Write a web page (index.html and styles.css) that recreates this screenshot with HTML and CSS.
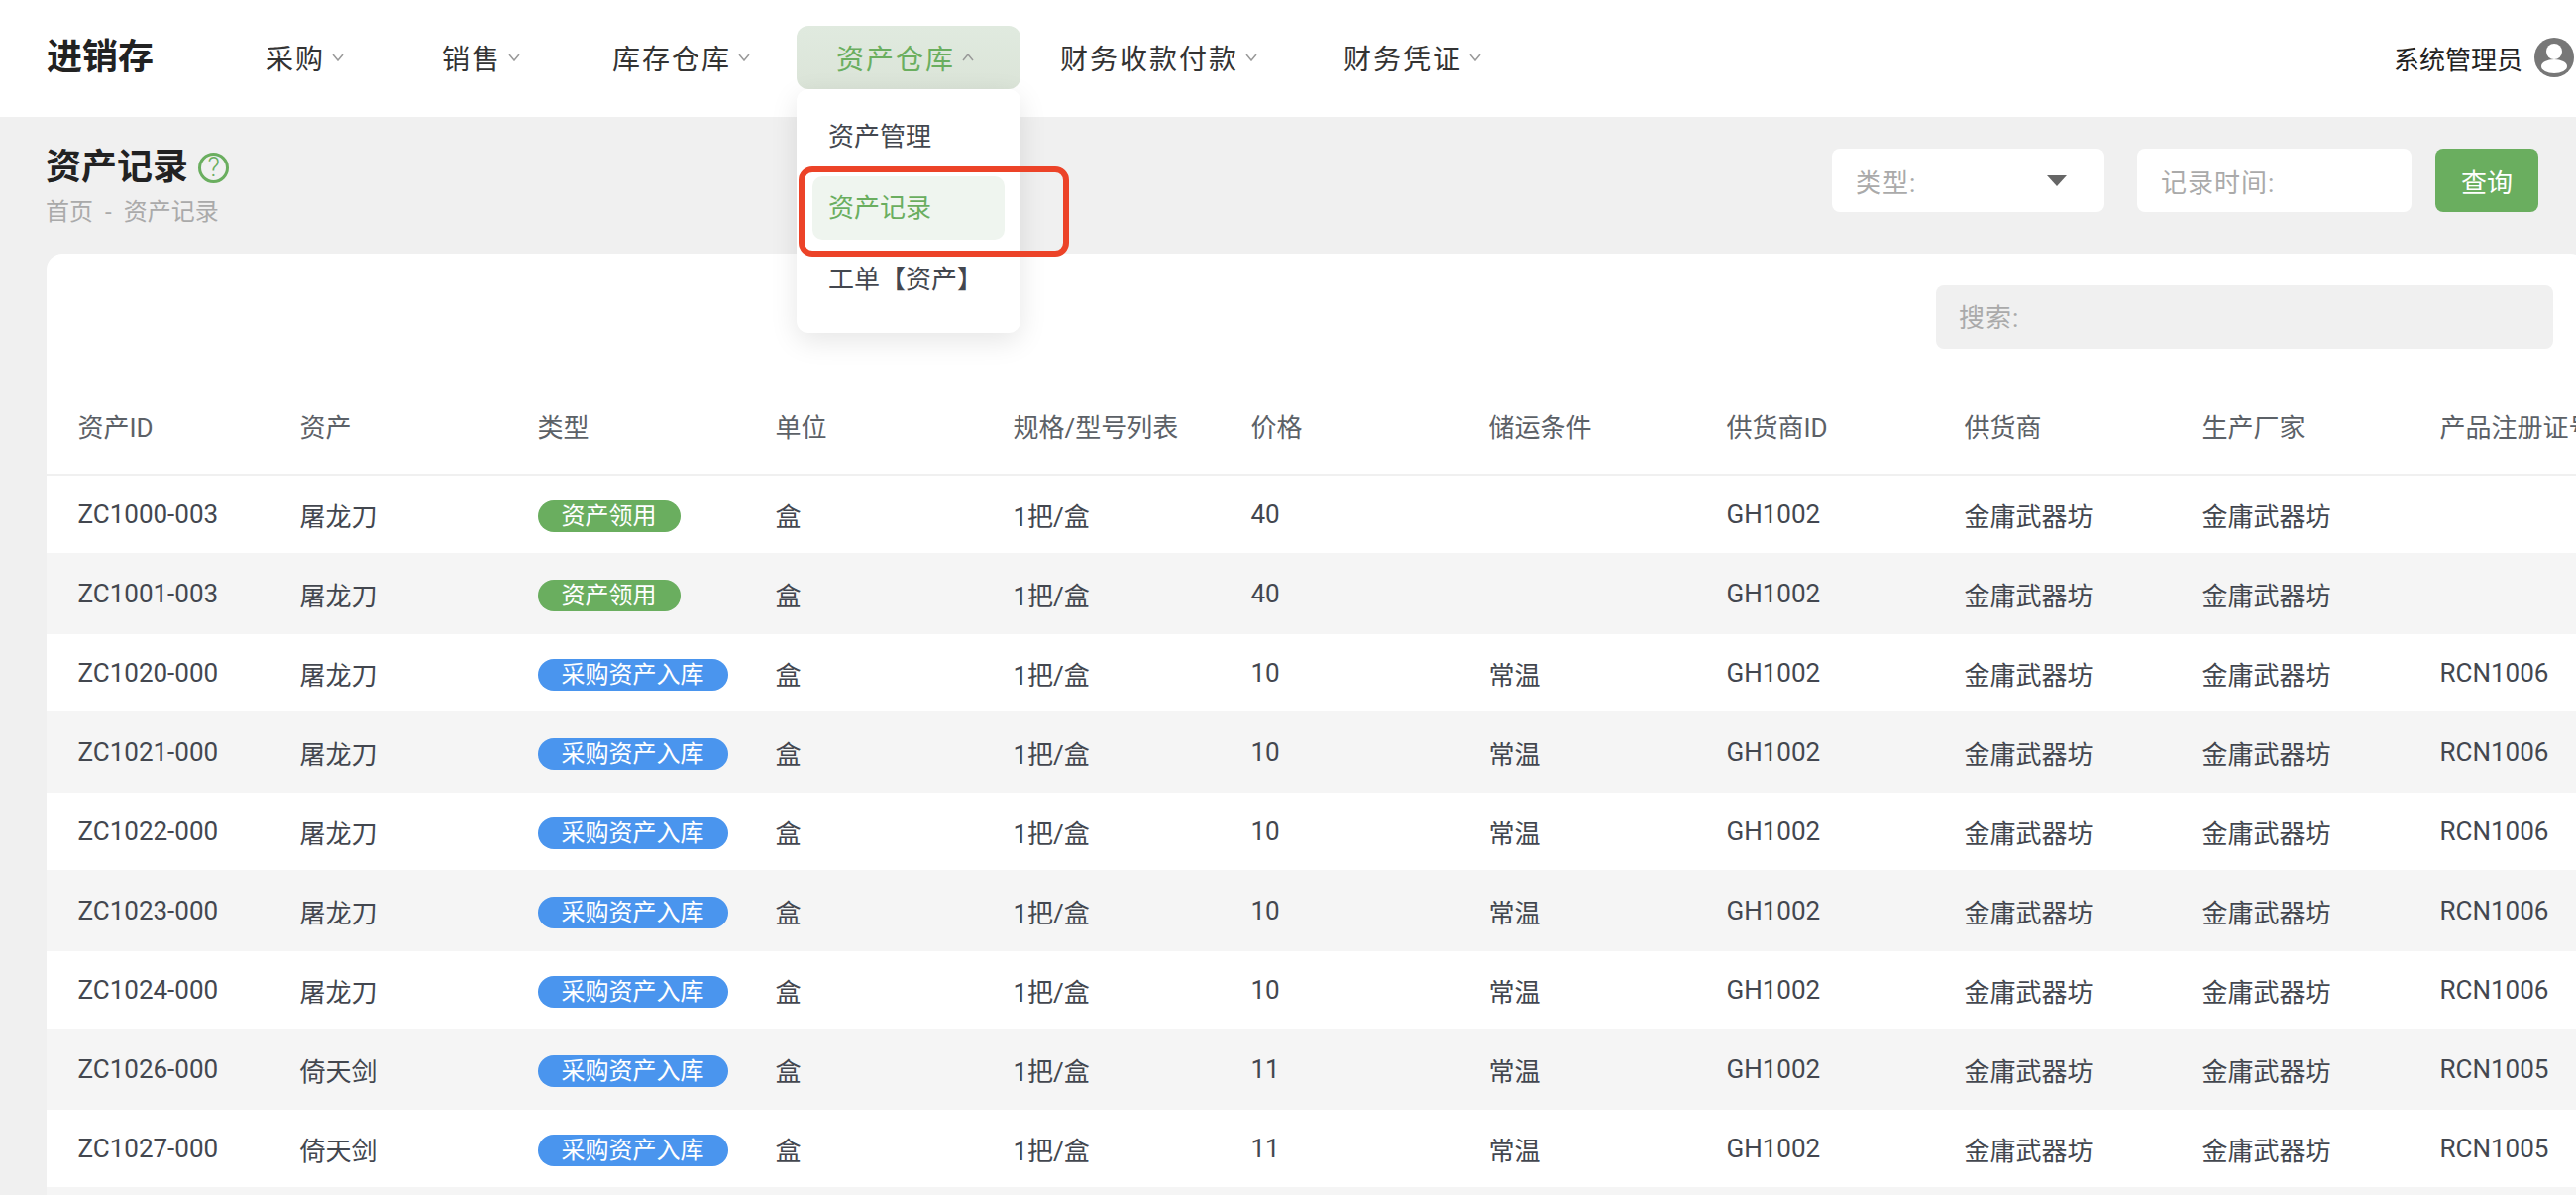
FILE: index.html
```html
<!DOCTYPE html>
<html lang="zh-CN">
<head>
<meta charset="utf-8">
<title>资产记录</title>
<link rel="stylesheet" href="styles.css">
</head>
<body>
<header class="topbar">
  <div class="logo">进销存</div>
  <nav class="nav">
    <div class="nav-item"><span class="nav-text">采购</span><svg class="chev" viewBox="0 0 12 8"><path d="M1 1l5 6 5-6"/></svg></div>
    <div class="nav-item"><span class="nav-text">销售</span><svg class="chev" viewBox="0 0 12 8"><path d="M1 1l5 6 5-6"/></svg></div>
    <div class="nav-item"><span class="nav-text">库存仓库</span><svg class="chev" viewBox="0 0 12 8"><path d="M1 1l5 6 5-6"/></svg></div>
    <div class="nav-item active"><span class="nav-text">资产仓库</span><svg class="chev" viewBox="0 0 12 8"><path d="M1 7l5-6 5 6"/></svg>
      <div class="dropdown">
        <div class="drop-item">资产管理</div>
        <div class="drop-item current">资产记录</div>
        <div class="drop-item">工单【资产】</div>
      </div>
      <div class="callout"></div>
    </div>
    <div class="nav-item"><span class="nav-text">财务收款付款</span><svg class="chev" viewBox="0 0 12 8"><path d="M1 1l5 6 5-6"/></svg></div>
    <div class="nav-item"><span class="nav-text">财务凭证</span><svg class="chev" viewBox="0 0 12 8"><path d="M1 1l5 6 5-6"/></svg></div>
  </nav>
  <div class="user">
    <span class="user-name">系统管理员</span>
    <svg class="avatar" viewBox="0 0 40 40"><circle cx="20" cy="20" r="20" fill="#777"/><circle cx="20" cy="14" r="8" fill="#fff"/><ellipse cx="20" cy="29" rx="13" ry="7" fill="#fff"/></svg>
  </div>
</header>
<section class="page-head">
  <div class="title-block">
    <div class="title-row"><h1 class="title">资产记录</h1><span class="help">?</span></div>
    <div class="crumb"><span>首页</span><span class="sep">-</span><span>资产记录</span></div>
  </div>
  <div class="filters">
    <div class="field field-select"><span>类型:</span><i class="caret"></i></div>
    <div class="field"><span>记录时间:</span></div>
    <button class="btn">查询</button>
  </div>
</section>
<main class="card">
  <div class="toolbar"><div class="search">搜索:</div></div>
  <div class="table-wrap">
    <table class="table">
      <thead>
        <tr><th>资产ID</th><th>资产</th><th>类型</th><th>单位</th><th>规格/型号列表</th><th>价格</th><th>储运条件</th><th>供货商ID</th><th>供货商</th><th>生产厂家</th><th>产品注册证号</th></tr>
      </thead>
      <tbody>
        <tr><td>ZC1000-003</td><td>屠龙刀</td><td><span class="tag green">资产领用</span></td><td>盒</td><td>1把/盒</td><td>40</td><td></td><td>GH1002</td><td>金庸武器坊</td><td>金庸武器坊</td><td></td></tr>
        <tr><td>ZC1001-003</td><td>屠龙刀</td><td><span class="tag green">资产领用</span></td><td>盒</td><td>1把/盒</td><td>40</td><td></td><td>GH1002</td><td>金庸武器坊</td><td>金庸武器坊</td><td></td></tr>
        <tr><td>ZC1020-000</td><td>屠龙刀</td><td><span class="tag blue">采购资产入库</span></td><td>盒</td><td>1把/盒</td><td>10</td><td>常温</td><td>GH1002</td><td>金庸武器坊</td><td>金庸武器坊</td><td>RCN1006</td></tr>
        <tr><td>ZC1021-000</td><td>屠龙刀</td><td><span class="tag blue">采购资产入库</span></td><td>盒</td><td>1把/盒</td><td>10</td><td>常温</td><td>GH1002</td><td>金庸武器坊</td><td>金庸武器坊</td><td>RCN1006</td></tr>
        <tr><td>ZC1022-000</td><td>屠龙刀</td><td><span class="tag blue">采购资产入库</span></td><td>盒</td><td>1把/盒</td><td>10</td><td>常温</td><td>GH1002</td><td>金庸武器坊</td><td>金庸武器坊</td><td>RCN1006</td></tr>
        <tr><td>ZC1023-000</td><td>屠龙刀</td><td><span class="tag blue">采购资产入库</span></td><td>盒</td><td>1把/盒</td><td>10</td><td>常温</td><td>GH1002</td><td>金庸武器坊</td><td>金庸武器坊</td><td>RCN1006</td></tr>
        <tr><td>ZC1024-000</td><td>屠龙刀</td><td><span class="tag blue">采购资产入库</span></td><td>盒</td><td>1把/盒</td><td>10</td><td>常温</td><td>GH1002</td><td>金庸武器坊</td><td>金庸武器坊</td><td>RCN1006</td></tr>
        <tr><td>ZC1026-000</td><td>倚天剑</td><td><span class="tag blue">采购资产入库</span></td><td>盒</td><td>1把/盒</td><td>11</td><td>常温</td><td>GH1002</td><td>金庸武器坊</td><td>金庸武器坊</td><td>RCN1005</td></tr>
        <tr><td>ZC1027-000</td><td>倚天剑</td><td><span class="tag blue">采购资产入库</span></td><td>盒</td><td>1把/盒</td><td>11</td><td>常温</td><td>GH1002</td><td>金庸武器坊</td><td>金庸武器坊</td><td>RCN1005</td></tr>
        <tr><td colspan="11"></td></tr>
      </tbody>
    </table>
  </div>
</main>
</body>
</html>
```
FILE: styles.css
```css
* { box-sizing: border-box; }
html, body { margin: 0; height: 100%; overflow: hidden; }
body {
  background: #f0f0f0;
  color: #43474f;
  font-family: Roboto, "Noto Sans CJK SC", sans-serif;
  font-size: 26px;
}
.topbar {
  height: 118px;
  background: #fff;
  display: flex;
  align-items: flex-start;
  padding-left: 47px;
}
.logo {
  width: 175px;
  height: 116px;
  line-height: 116px;
  font-size: 36px;
  font-weight: 700;
  color: #222;
}
.nav { display: flex; margin-top: 26px; }
.nav-item {
  position: relative;
  min-width: 178px;
  height: 64px;
  padding: 0 40px;
  display: flex;
  align-items: center;
  justify-content: center;
  border-radius: 12px;
  color: #333;
}
.nav-text { font-size: 28px; letter-spacing: 2px; }
.chev {
  width: 12px;
  height: 8px;
  margin: 0 7px;
  fill: none;
  stroke: #999;
  stroke-width: 1.5;
}
.nav-item.active {
  background: linear-gradient(#e0eadf, #dbe4d8);
  color: #6aae5f;
}
.dropdown {
  position: absolute;
  top: 64px;
  left: 0;
  width: 226px;
  height: 246px;
  background: #fff;
  border-radius: 12px;
  padding: 16px;
  box-shadow: 0 8px 28px rgba(0, 0, 0, .1);
  z-index: 5;
}
.drop-item {
  height: 64px;
  margin-bottom: 8px;
  line-height: 64px;
  padding-left: 16px;
  font-size: 26px;
  border-radius: 10px;
  color: #43474f;
}
.drop-item.current { background: #eff5ef; color: #6aae5f; }
.callout {
  position: absolute;
  left: 2px;
  top: 142px;
  width: 273px;
  height: 91px;
  border: 6px solid #ec4328;
  border-radius: 14px;
  z-index: 6;
}
.user { margin-left: auto; display: flex; align-items: center; height: 116px; padding-right: 2px; }
.user-name { font-size: 26px; color: #222; margin-right: 12px; }
.avatar { width: 40px; height: 40px; }
.page-head {
  height: 138px;
  padding: 33px 38px 0 46px;
  display: flex;
  justify-content: space-between;
  align-items: flex-start;
}
.title-row { display: flex; align-items: center; height: 36px; }
.title { margin: 0; font-size: 36px; font-weight: 700; color: #222; line-height: 36px; }
.help {
  width: 31px;
  height: 31px;
  margin-left: 10px;
  border: 3px solid #6aae5f;
  border-radius: 50%;
  color: #6aae5f;
  font-size: 27px;
  font-weight: 300;
  line-height: 25px;
  text-align: center;
}
.crumb { margin-top: 10px; font-size: 24px; color: #aaa; line-height: 34px; display: flex; }
.sep { margin: 0 12px; }
.filters { display: flex; gap: 33px; margin-top: -1px; }
.field {
  width: 277px;
  height: 64px;
  background: #fff;
  border-radius: 8px;
  padding: 0 24px;
  display: flex;
  align-items: center;
  justify-content: space-between;
  color: #aaa;
  font-size: 26px;
  letter-spacing: 1px;
}
.field-select { width: 275px; }
.caret {
  margin-right: 14px;
  border-top: 11px solid #666;
  border-left: 10px solid transparent;
  border-right: 10px solid transparent;
}
.btn {
  width: 104px;
  height: 64px;
  margin-left: -9px;
  border: 0;
  border-radius: 8px;
  background: #6aae5f;
  color: #fff;
  font: 400 26px "Noto Sans CJK SC", sans-serif;
}
.card {
  margin: 0 -10px 0 47px;
  height: 950px;
  background: #fff;
  border-radius: 16px 16px 0 0;
  overflow: hidden;
}
.toolbar { height: 128px; padding: 32px 33px 0 0; display: flex; justify-content: flex-end; }
.search {
  width: 623px;
  height: 64px;
  background: #f0f0f0;
  border-radius: 8px;
  padding-left: 23px;
  line-height: 67px;
  color: #aaa;
  font-size: 26px;
  letter-spacing: 1px;
}
.table { width: 2624px; table-layout: fixed; border-collapse: separate; border-spacing: 0; }
.table th {
  height: 96px;
  padding: 0 0 4px 31.5px;
  text-align: left;
  font-weight: 400;
  color: #5c6167;
  border-bottom: 2px solid #f0f0f0;
}
.table th:first-child { width: 224px; }
.table th:not(:first-child) { width: 240px; }
.table td { padding: 0 0 0 31.5px; height: 78px; white-space: nowrap; }
.table tbody tr:nth-child(even) td { height: 82px; background: #f5f5f5; }
.tag {
  display: inline-block;
  height: 32px;
  padding: 0 24px;
  border-radius: 16px;
  color: #fff;
  font-size: 24px;
  line-height: 32px;
  vertical-align: middle;
  position: relative;
  top: 1px;
}
.green { background: #6aae5f; }
.blue { background: #4a95ee; }
```
